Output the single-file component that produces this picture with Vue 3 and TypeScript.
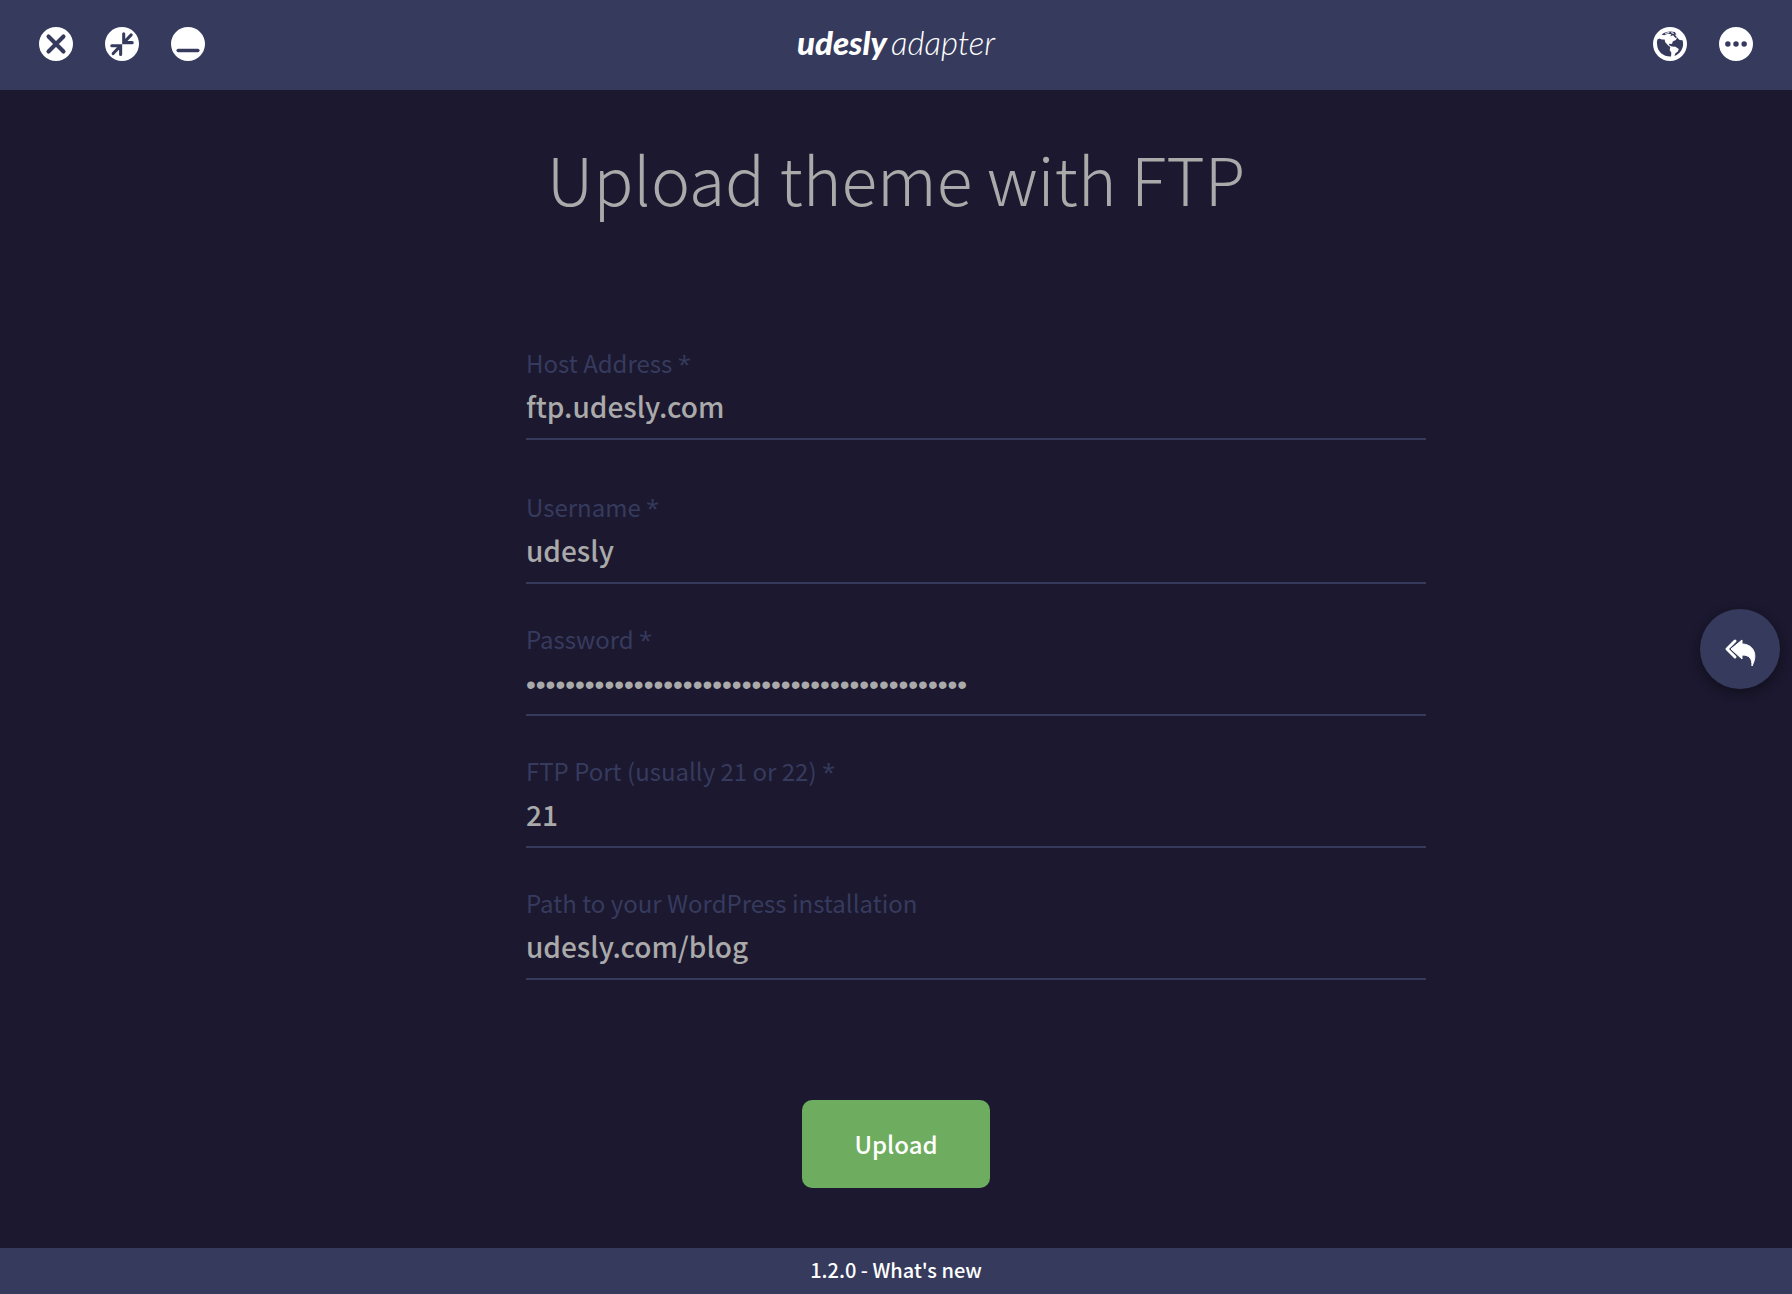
<script setup lang="ts">
import { ref } from 'vue'

interface Field {
  id: string
  label: string
  type: string
  required: boolean
  value: string
}

const fields = ref<Field[]>([
  { id: 'host', label: 'Host Address', type: 'text', required: true, value: 'ftp.udesly.com' },
  { id: 'username', label: 'Username', type: 'text', required: true, value: 'udesly' },
  { id: 'password', label: 'Password', type: 'password', required: true, value: 'x'.repeat(45) },
  { id: 'port', label: 'FTP Port (usually 21 or 22)', type: 'text', required: true, value: '21' },
  { id: 'path', label: 'Path to your WordPress installation', type: 'text', required: false, value: 'udesly.com/blog' },
])
</script>

<template>
  <div class="app">
    <header class="bar">
      <div class="group">
        <button type="button" class="icon" aria-label="Close">
          <svg viewBox="0 0 100 100">
            <circle cx="50" cy="50" r="50" fill="#fff" />
            <path d="M28 28 72 72M72 28 28 72" class="cut" stroke-width="12" />
          </svg>
        </button>
        <button type="button" class="icon" aria-label="Shrink">
          <svg viewBox="0 0 100 100">
            <circle cx="50" cy="50" r="50" fill="#fff" />
            <path d="M55 20V46H80M57 44 77 23M20 55H46V81M44 57 24 78" class="cut" stroke-width="9" />
          </svg>
        </button>
        <button type="button" class="icon" aria-label="Minimize">
          <svg viewBox="0 0 100 100">
            <circle cx="50" cy="50" r="50" fill="#fff" />
            <path d="M21 69H79" class="cut" stroke-width="10" />
          </svg>
        </button>
      </div>
      <div class="logo"><span class="brand">udesly</span><span class="product">adapter</span></div>
      <div class="group end">
        <button type="button" class="icon" aria-label="Website">
          <svg viewBox="0 0 100 100">
            <circle cx="50" cy="50" r="50" fill="#fff" />
            <path class="sea" d="M13 37 19 34 26 37 34 37 36 45 44 54 51 59 49 68 54 76 53 87C32 88 12 73 12 50Q11 43 13 37Z" />
            <path class="sea" d="M87 39C93 58 82 79 63 85L66 77 73 72 76 65 66 58 55 57 47 53 48 49 56 50 58 43 67 38 71 31 78 38Z" />
            <path class="sea" d="M25 22Q36 13 52 13L64 15 69 22 64 23 71 30 66 32 59 24 51 27 54 21 43 20 33 24Z" />
            <path d="M36 19 48 16M54 16 61 19" stroke="#fff" stroke-width="3" />
          </svg>
        </button>
        <button type="button" class="icon" aria-label="More">
          <svg viewBox="0 0 100 100">
            <circle cx="50" cy="50" r="50" fill="#fff" />
            <g class="sea">
              <circle cx="26" cy="50" r="8" />
              <circle cx="50" cy="50" r="8" />
              <circle cx="74" cy="50" r="8" />
            </g>
          </svg>
        </button>
      </div>
    </header>

    <main>
      <h1>Upload theme with FTP</h1>
      <form @submit.prevent>
        <div class="fields">
          <div v-for="field in fields" :key="field.id" class="field">
            <label :for="field.id">{{ field.label }} <span v-if="field.required" class="star">*</span></label>
            <input :id="field.id" v-model="field.value" :type="field.type" :required="field.required" autocomplete="off" spellcheck="false" />
          </div>
        </div>
        <button type="submit" class="upload">Upload</button>
      </form>
    </main>

    <footer><a href="#whats-new">1.2.0 - What's new</a></footer>

    <button type="button" class="back" aria-label="Back">
      <svg viewBox="0 0 80 80">
        <path d="M35 32 27 40 35 48" fill="none" stroke="#fff" stroke-width="3" stroke-linecap="round" stroke-linejoin="round" />
        <path d="M42 31V35C52 35 59 44 52 57C52 50 50 46 42 46V50L31 40Z" fill="#fff" stroke="#fff" stroke-linejoin="round" />
      </svg>
    </button>
  </div>
</template>

<style>
body {
  margin: 0;
  background: #1b182f;
}
</style>

<style scoped>
.app {
  display: flex;
  flex-direction: column;
  min-height: 100vh;
  background: #1b182f;
  color: #aaa;
  font-family: "Noto Sans CJK SC", "Noto Sans", sans-serif;
}

button,
input {
  margin: 0;
  border: 0;
  font-family: inherit;
}

svg {
  display: block;
  width: 100%;
  height: 100%;
}

.bar {
  display: grid;
  grid-template-columns: 1fr auto 1fr;
  align-items: center;
  box-sizing: border-box;
  height: 90px;
  padding: 0 39px 2px;
  background: #363b5e;
}

.group {
  display: flex;
  gap: 32px;
}

.end {
  justify-content: flex-end;
}

.icon {
  width: 34px;
  height: 34px;
  padding: 0;
  background: none;
}

.cut {
  fill: none;
  stroke: #363b5e;
  stroke-linecap: round;
}

.sea {
  fill: #363b5e;
}

.logo {
  display: flex;
  gap: 4px;
  padding-bottom: 4px;
  color: #fff;
  font-family: Lato, sans-serif;
  font-size: 33px;
  font-style: italic;
  line-height: 40px;
}

.brand {
  font-weight: 900;
}

.product {
  font-weight: 300;
}

main {
  display: flex;
  flex: 1;
  flex-direction: column;
  padding: 39px 32px 60px;
}

h1 {
  margin: 0 0 122px;
  font-size: 66px;
  font-weight: 300;
  line-height: 96px;
  text-align: center;
}

form {
  display: flex;
  flex-direction: column;
  align-items: center;
  gap: 120px;
}

.fields {
  display: flex;
  flex-direction: column;
  gap: 39px;
  box-sizing: border-box;
  width: 100%;
  max-width: 1060px;
  padding-left: 160px;
}

.field:first-child {
  margin-bottom: 12px;
}

label {
  display: block;
  height: 32px;
  color: #363b5e;
  font-size: 24px;
  line-height: 32px;
}

.star {
  font-family: "Open Sans", sans-serif;
  line-height: 20px;
}

input {
  display: block;
  box-sizing: border-box;
  width: 100%;
  height: 61px;
  padding: 9px 0 14px;
  border-bottom: 2px solid #363b5e;
  border-radius: 0;
  outline: 0;
  background: none;
  color: #aaa;
  font-size: 28px;
  font-weight: 500;
  line-height: 36px;
}

input[type="password"] {
  padding: 12px 0 11px;
  font-family: "Liberation Sans", Arial, sans-serif;
  font-weight: 400;
}

.upload {
  width: 188px;
  height: 88px;
  padding: 0 0 2px;
  border-radius: 10px;
  background: #6eac5f;
  color: #fff;
  font-size: 24px;
  font-weight: 500;
}

footer {
  padding-bottom: 2px;
  background: #363b5e;
  font-size: 20px;
  font-weight: 500;
  line-height: 44px;
  text-align: center;
}

footer a {
  color: #fff;
  text-decoration: none;
}

.back {
  position: fixed;
  top: 50%;
  right: 12px;
  width: 80px;
  height: 80px;
  margin-top: -38px;
  padding: 0;
  border-radius: 50%;
  background: #363b5e;
  box-shadow: 0 4px 12px rgba(0, 0, 0, 0.4);
}
</style>
